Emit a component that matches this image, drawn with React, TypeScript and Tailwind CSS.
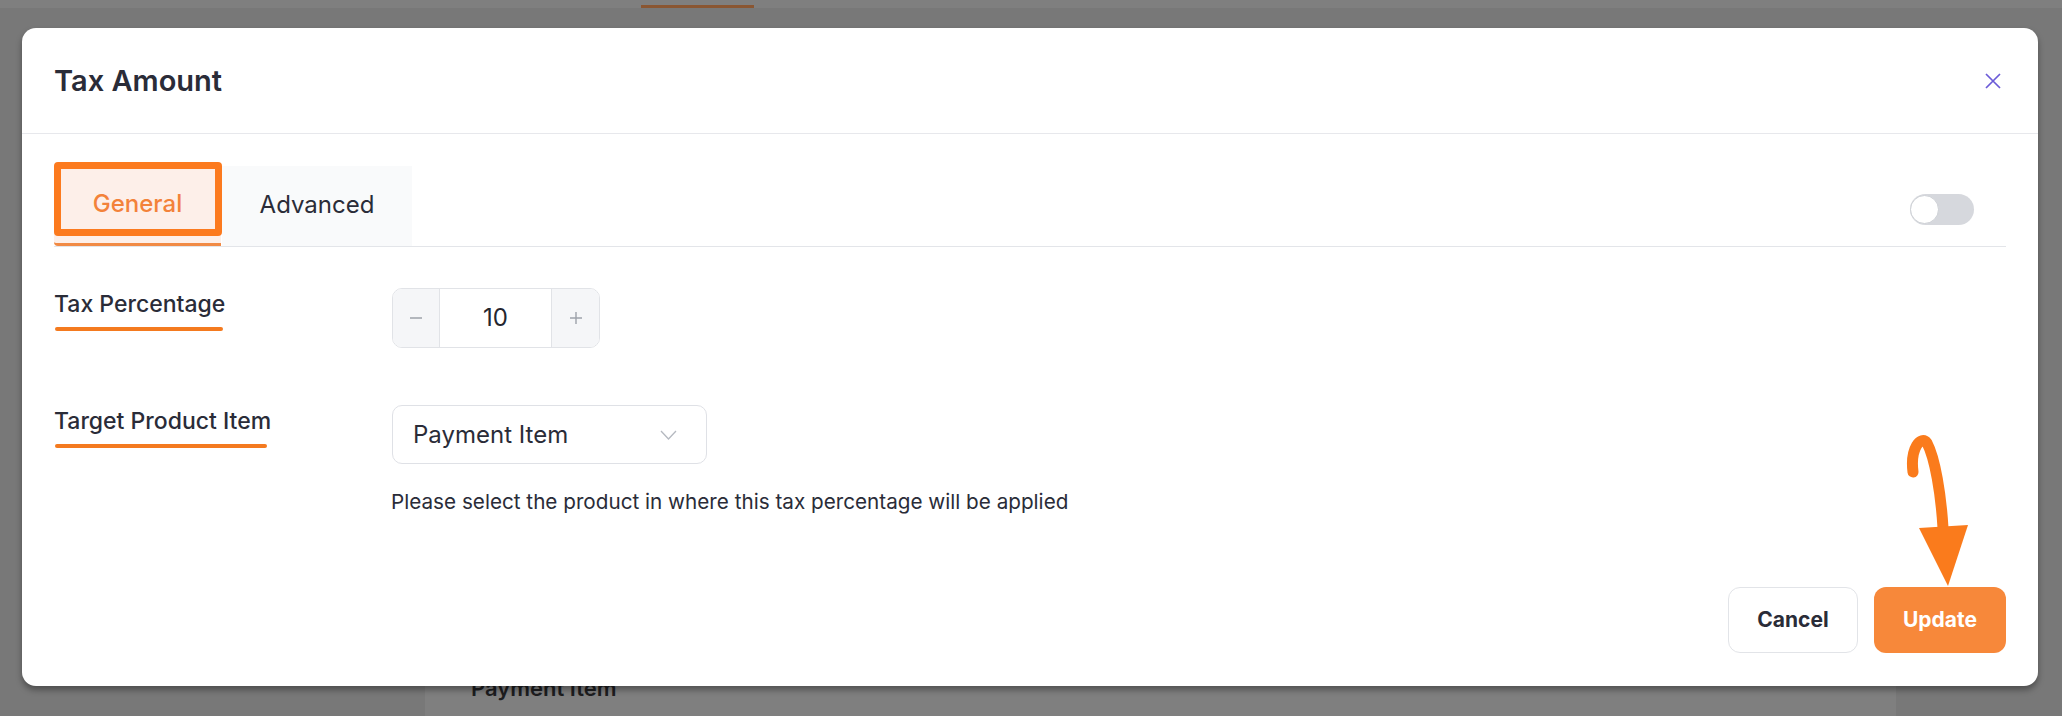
import { useState } from 'react';

const CloseIcon = () => (
  <svg width="16" height="16" viewBox="0 0 16 16" fill="none" stroke="#6b5bd8" strokeWidth="1.7">
    <path d="M1 1L15 15M15 1L1 15" />
  </svg>
);

const Minus = () => (
  <svg width="12" height="12" viewBox="0 0 12 12" stroke="#9da2aa" strokeWidth="1.4">
    <path d="M0 6H12" />
  </svg>
);

const Plus = () => (
  <svg width="12" height="12" viewBox="0 0 12 12" stroke="#9da2aa" strokeWidth="1.4">
    <path d="M0 6H12M6 0V12" />
  </svg>
);

const Chevron = () => (
  <svg width="17" height="10" viewBox="0 0 17 10" fill="none" stroke="#b5b9c0" strokeWidth="1.3">
    <path d="M1 1L8.5 9L16 1" />
  </svg>
);

const Label = ({ text, line }: { text: string; line: string }) => (
  <div className="w-[338px] shrink-0 pt-[2px]">
    <p className="text-[23px] leading-[28px] font-medium text-[#2a2c38]">{text}</p>
    <div className={`mt-[9px] ml-[1px] h-[4px] rounded-full bg-[#f47a1f] ${line}`} />
  </div>
);

export default function App() {
  const [value, setValue] = useState(10);

  return (
    <div className="relative w-[2062px] h-[716px] overflow-hidden bg-[#787878] font-['Inter',sans-serif]">
      {/* page behind the dialog */}
      <div className="flex flex-col h-full">
        <div className="h-[8px] bg-[#7f7f7f] flex">
          <div className="ml-[641px] mt-[5px] w-[113px] h-[3px] bg-[#8a5632]" />
        </div>
        <div className="flex flex-1">
          <div className="w-[425px]" />
          <div className="mt-[560px] w-[1471px] bg-[#7f7f7f] flex flex-col justify-end pb-[14px] pl-[46px]">
            <p className="text-[22px] leading-[28px] font-semibold text-[#1d1d1f]">Payment Item</p>
          </div>
        </div>
      </div>

      {/* dialog */}
      <div className="absolute left-[22px] top-[28px] w-[2016px] h-[658px] bg-white rounded-[14px] shadow-[0_4px_6px_rgba(0,0,0,0.35)] flex flex-col">
        <div className="h-[106px] shrink-0 flex items-center justify-between pl-[32px] pr-[37px] border-b border-[#e7e8ec]">
          <h2 className="text-[29px] font-semibold text-[#2a2c38]">Tax Amount</h2>
          <button className="flex items-center justify-center">
            <CloseIcon />
          </button>
        </div>

        <div className="flex-1 flex flex-col px-[32px]">
          <div className="mt-[32px] flex items-end border-b border-[#e3e5e9]">
            <div className="relative w-[167px] h-[80px] pb-[2px] bg-[#fdefe9] border-b-[3px] border-[#f18a45] rounded-bl-[4px] flex items-center justify-center text-[24px] font-medium text-[#f3823a]">
              General
              <div className="absolute -top-[4px] left-0 w-[168px] h-[74px] border-[7px] border-[#fc7a1e] rounded-[4px]" />
            </div>
            <div className="ml-[1px] w-[190px] h-[80px] pb-[2px] bg-[#f9fafb] flex items-center justify-center text-[24px] text-[#2a2c38]">
              Advanced
            </div>
            <div className="ml-auto mr-[32px] mb-[21px] w-[64px] h-[31px] rounded-full bg-[#d6d8dd] flex items-center">
              <div className="w-[29px] h-[29px] rounded-full bg-white border border-[#cdd0d5]" />
            </div>
          </div>

          <div className="mt-[41px] flex items-start">
            <Label text="Tax Percentage" line="w-[168px]" />
            <div className="w-[208px] h-[60px] flex rounded-[10px] border border-[#e1e3e7] overflow-hidden">
              <button onClick={() => setValue(value - 1)} className="w-[47px] bg-[#f5f6f8] border-r border-[#e1e3e7] flex items-center justify-center">
                <Minus />
              </button>
              <div className="flex-1 flex items-center justify-center text-[24px] text-[#24262f]">{value}</div>
              <button onClick={() => setValue(value + 1)} className="w-[48px] bg-[#f5f6f8] border-l border-[#e1e3e7] flex items-center justify-center">
                <Plus />
              </button>
            </div>
          </div>

          <div className="mt-[57px] flex items-start">
            <Label text="Target Product Item" line="w-[212px]" />
            <div className="flex flex-col">
              <div className="w-[315px] h-[59px] rounded-[10px] border border-[#dfe1e6] flex items-center justify-between pl-[20px] pr-[29px]">
                <span className="text-[24px] text-[#2a2c38]">Payment Item</span>
                <Chevron />
              </div>
              <p className="mt-[24px] -ml-[1px] text-[20.7px] leading-[28px] text-[#2a2c38]">
                Please select the product in where this tax percentage will be applied
              </p>
            </div>
          </div>

          <div className="mt-auto mb-[33px] flex justify-end gap-[16px]">
            <button className="w-[130px] h-[66px] rounded-[12px] border border-[#e2e4e8] bg-white text-[21px] font-bold text-[#2a2c38]">
              Cancel
            </button>
            <button className="w-[132px] h-[66px] rounded-[12px] bg-[#f7883a] text-[21px] font-bold text-white">
              Update
            </button>
          </div>
        </div>
      </div>

      {/* annotation arrow */}
      <svg className="absolute left-[1900px] top-[432px]" width="80" height="160" viewBox="0 0 80 160" fill="none">
        <path d="M13 40C10 16 21 3 27 11C35 26 41 62 43 96" stroke="#fa7b1c" strokeWidth="11" strokeLinecap="round" />
        <path d="M19 96L68 93L48 154Z" fill="#fa7b1c" />
      </svg>
    </div>
  );
}
